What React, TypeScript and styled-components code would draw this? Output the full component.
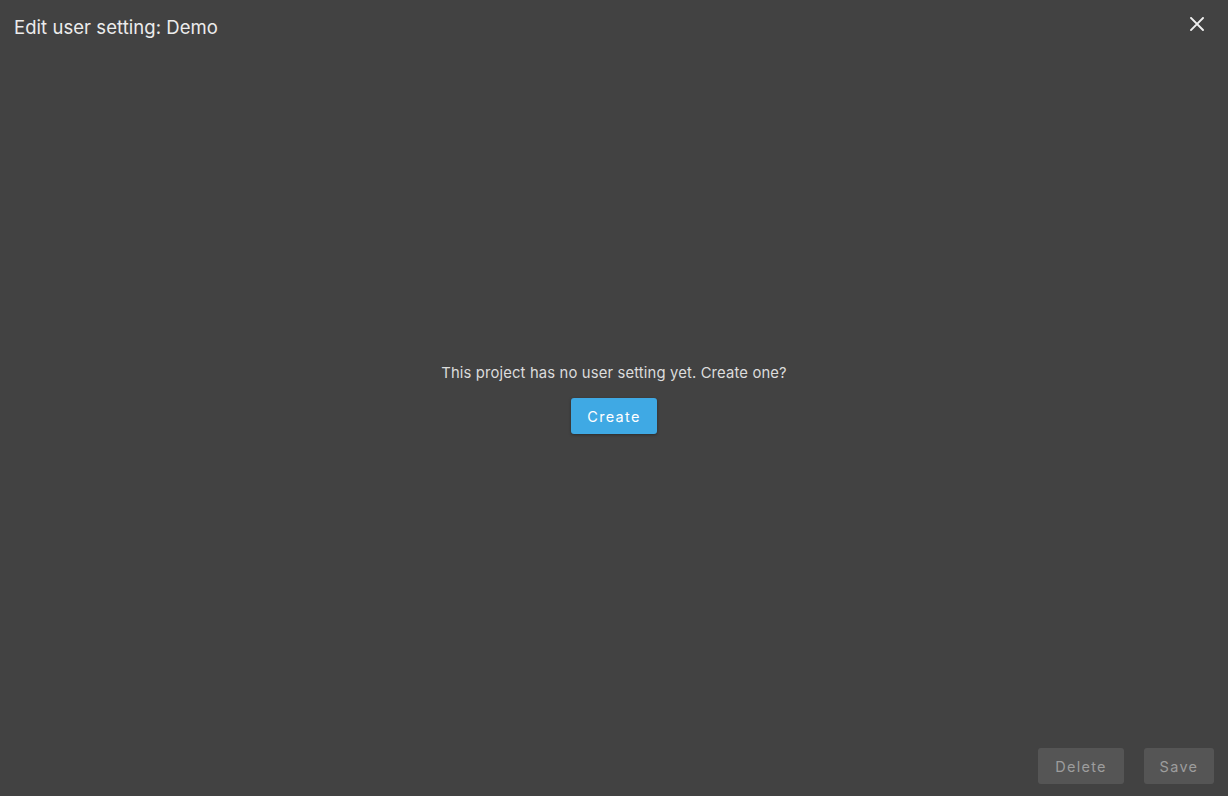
import styled, { createGlobalStyle } from 'styled-components';

const GlobalStyle = createGlobalStyle`
  html, body {
    margin: 0;
    padding: 0;
    height: 100%;
    background: #424242;
  }
  #root {
    height: 100%;
  }
`;

const Dialog = styled.div`
  display: flex;
  flex-direction: column;
  width: 1228px;
  height: 796px;
  background-color: #424242;
  font-family: Inter, 'Open Sans', sans-serif;
  color: #e8e8e8;
  box-sizing: border-box;
`;

const Header = styled.div`
  display: flex;
  align-items: center;
  justify-content: space-between;
  height: 56px;
  padding: 0 14px 0 14px;
`;

const Title = styled.h2`
  margin: 0;
  margin-top: -2px;
  font-size: 18.5px;
  font-weight: 400;
  letter-spacing: 0.05px;
  color: #ececec;
`;

const CloseButton = styled.button`
  display: flex;
  align-items: center;
  justify-content: center;
  width: 28px;
  height: 28px;
  margin-top: -8px;
  margin-right: 3px;
  border: none;
  padding: 0;
  background: transparent;
  color: #f0f0f0;
  cursor: pointer;
`;

const Body = styled.div`
  flex: 1;
  display: flex;
  flex-direction: column;
  align-items: center;
  justify-content: center;
  gap: 16px;
  padding-bottom: 6px;
`;

const Message = styled.p`
  margin: 0;
  font-size: 14.8px;
  color: #dcdcdc;
  letter-spacing: 0.15px;
`;

const Button = styled.button<{ $primary?: boolean; $width: number }>`
  width: ${({ $width }) => $width}px;
  height: 36px;
  border: none;
  border-radius: 3px;
  font-family: inherit;
  font-size: 14.5px;
  font-weight: 400;
  letter-spacing: 1.3px;
  cursor: pointer;
  background-color: ${({ $primary }) => ($primary ? '#3fa9e4' : '#555555')};
  color: ${({ $primary }) => ($primary ? '#ffffff' : '#9d9d9d')};
  box-shadow: ${({ $primary }) =>
    $primary ? '0 1px 3px rgba(0, 0, 0, 0.35)' : 'none'};
`;

const Footer = styled.div`
  display: flex;
  justify-content: flex-end;
  gap: 20px;
  padding: 0 14px 12px 0;
`;

function App() {
  return (
    <>
      <GlobalStyle />
      <Dialog>
        <Header>
          <Title>Edit user setting: Demo</Title>
          <CloseButton aria-label="close">
            <svg width="14" height="14" viewBox="0 0 14 14">
              <path d="M1 1 L13 13 M13 1 L1 13" stroke="currentColor" strokeWidth="1.9" strokeLinecap="square" />
            </svg>
          </CloseButton>
        </Header>
        <Body>
          <Message>This project has no user setting yet. Create one?</Message>
          <Button $primary $width={86}>Create</Button>
        </Body>
        <Footer>
          <Button $width={86} disabled>Delete</Button>
          <Button $width={70} disabled>Save</Button>
        </Footer>
      </Dialog>
    </>
  );
}

export default App;
